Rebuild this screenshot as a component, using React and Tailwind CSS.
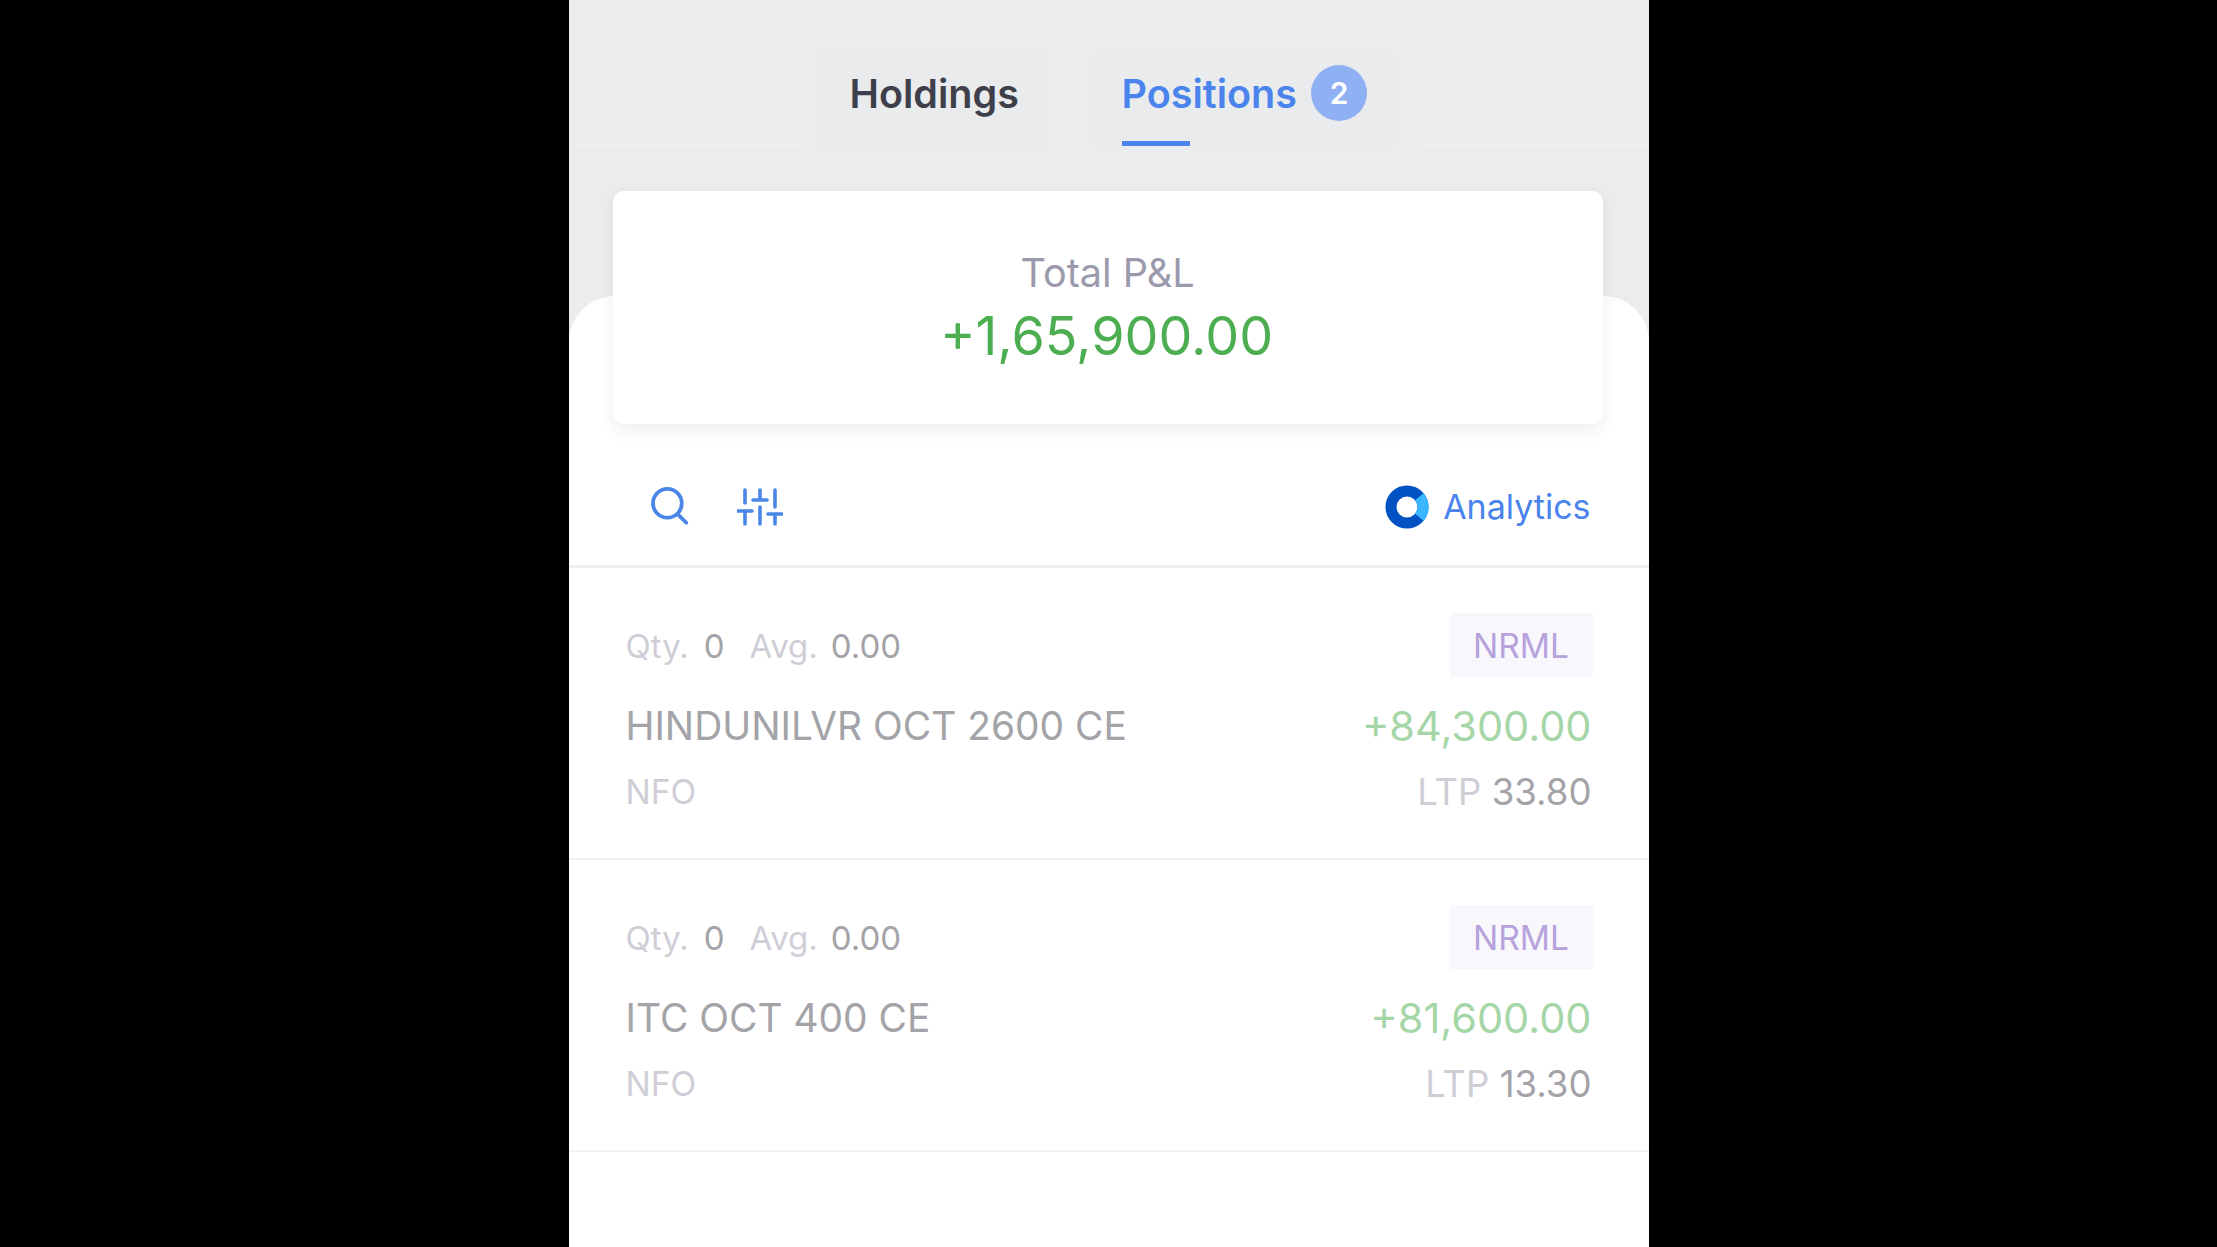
const positions = [
  { name: "HINDUNILVR OCT 2600 CE", pnl: "+84,300.00", ltp: "33.80" },
  { name: "ITC OCT 400 CE", pnl: "+81,600.00", ltp: "13.30" },
];

function SearchIcon() {
  return (
    <svg width="42" height="42" viewBox="0 0 40 40" fill="none" stroke="#4a86e8" strokeWidth="3.6" strokeLinecap="round">
      <circle cx="17.5" cy="16.5" r="13.7" />
      <path d="M28 27.5 35.5 35" />
    </svg>
  );
}

function SlidersIcon() {
  return (
    <svg width="46" height="38" viewBox="0 0 46 38" fill="none" stroke="#4a86e8" strokeWidth="3.6" strokeLinecap="round">
      <path d="M8 2v13M1 23h14M8 23v13" />
      <path d="M23 2v9M16 12h14M23 19v17" />
      <path d="M38 2v17M31 26h14M38 26v10" />
    </svg>
  );
}

function AnalyticsLogo() {
  return (
    <svg width="44" height="44" viewBox="0 0 44 44" fill="none">
      <circle cx="22" cy="22" r="16" stroke="#0052c2" strokeWidth="11" />
      <path d="M34.3 11.7A16 16 0 0 1 34.3 32.3" stroke="#38b6ff" strokeWidth="11" />
    </svg>
  );
}

function PositionRow({ name, pnl, ltp }) {
  return (
    <div className="h-[292px] border-b-2 border-[#f2f2f3] pt-[45px] pl-[57px] pr-[57px]">
      <div className="flex items-center justify-between h-[64px]">
        <div className="pt-[3px] text-[33px] text-[#cfced6]">
          Qty.<span className="ml-[15px] text-[#a3a3a8]">0</span>
          <span className="ml-[25px]">Avg.</span>
          <span className="ml-[13px] text-[#a3a3a8]">0.00</span>
        </div>
        <div className="w-[143px] h-[64px] -mr-px pt-[2px] flex items-center justify-center bg-[#f8f7fc] text-[33.5px] text-[#b7a2dc]">
          NRML
        </div>
      </div>
      <div className="flex items-center justify-between mt-[19px] h-[60px]">
        <div className="text-[38.9px] text-[#a3a3a8]">{name}</div>
        <div className="text-[41.5px] text-[#a5d6a7]">{pnl}</div>
      </div>
      <div className="flex items-center justify-between mt-[11px] h-[50px]">
        <div className="text-[33.5px] text-[#cfced6]">NFO</div>
        <div className="text-[36.6px] text-[#a3a3a8]">
          <span className="text-[#cfced6]">LTP</span> {ltp}
        </div>
      </div>
    </div>
  );
}

export default function App() {
  return (
    <div className="h-[1247px] overflow-hidden bg-black flex justify-center font-['Inter',sans-serif]">
      <div className="w-[1080px] bg-[#ebecee] flex flex-col">
        {/* tabs */}
        <div className="relative h-[146px] flex justify-center pt-[52px]">
          <div className="absolute left-0 right-0 top-[145px] flex justify-between">
            <div className="w-[231px] h-px bg-[#f1f2f3]" />
            <div className="w-[228px] h-px bg-[#f1f2f3]" />
          </div>
          <div className="flex gap-[45px] pr-[5px]">
            <div className="w-[230px] h-[94px] bg-[#eaebed] pl-[31px] flex items-start pt-[13px] text-[39.5px] leading-[58px] font-semibold text-[#3e3f4b]">
              Holdings
            </div>
            <div className="relative w-[300px] h-[94px] bg-[#eaebed] pl-[28px] flex items-start pt-[13px] text-[39.5px] leading-[58px] font-semibold text-[#4a84ec]">
              Positions
              <span className="ml-[14px] w-[56px] h-[56px] rounded-full bg-[#8fb0f2] flex items-center justify-center text-[30px] text-white">
                2
              </span>
              <div className="absolute left-[28px] bottom-0 w-[68px] h-[5px] bg-[#4a84ec]" />
            </div>
          </div>
        </div>

        <div className="h-[150px]" />

        <div className="flex-1 bg-white rounded-t-[46px]">
          {/* total card */}
          <div className="relative ml-[44px] mr-[46px] -mt-[105px] h-[233px] bg-white rounded-[10px] shadow-[0_6px_18px_rgba(0,0,0,0.07)] flex flex-col items-center pt-[54px]">
            <div className="text-[39.6px] leading-[56px] text-[#9b9aac]">Total P&amp;L</div>
            <div className="pr-[2px] text-[53.8px] leading-[70px] text-[#4cae50]">+1,65,900.00</div>
          </div>

          {/* toolbar */}
          <div className="h-[144px] border-b-[3px] border-[#f0f0f1] flex items-center justify-between pl-[80px] pr-[58px] pt-[24px]">
            <div className="flex items-center gap-[46px]">
              <SearchIcon />
              <SlidersIcon />
            </div>
            <div className="flex items-center gap-[14px]">
              <AnalyticsLogo />
              <span className="text-[34px] text-[#4a84ec]">Analytics</span>
            </div>
          </div>

          {positions.map((p) => (
            <PositionRow key={p.name} {...p} />
          ))}
        </div>
      </div>
    </div>
  );
}
